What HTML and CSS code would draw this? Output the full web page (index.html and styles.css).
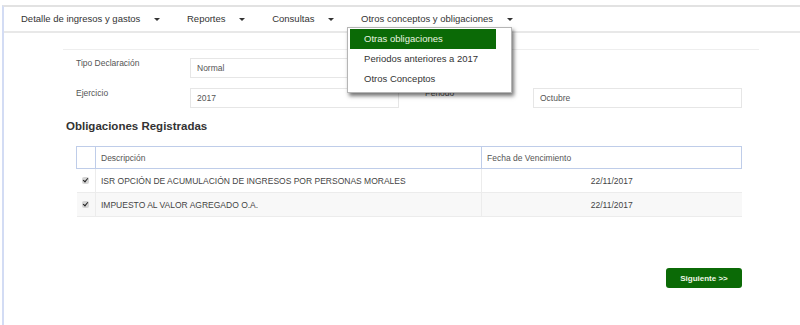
FILE: index.html
```html
<!DOCTYPE html>
<html>
<head>
  <title>Obligaciones Registradas</title>
  <link rel="stylesheet" href="styles.css">
</head>
<body>
  <div class="page">
    <ul class="navbar">
      <li>Detalle de ingresos y gastos <span class="caret"></span></li>
      <li>Reportes <span class="caret"></span></li>
      <li>Consultas <span class="caret"></span></li>
      <li class="open">Otros conceptos y obligaciones <span class="caret"></span>
        <ul class="dropdown">
          <li class="active">Otras obligaciones</li>
          <li>Periodos anteriores a 2017</li>
          <li>Otros Conceptos</li>
        </ul>
      </li>
    </ul>

    <div class="content">
      <div class="rule"></div>

      <form class="form-grid">
        <label>Tipo Declaración</label>
        <div class="field">Normal</div>
        <span></span>
        <span></span>

        <label>Ejercicio</label>
        <div class="field">2017</div>
        <label class="label-right">Periodo</label>
        <div class="field">Octubre</div>
      </form>

      <h2 class="section-title">Obligaciones Registradas</h2>

      <table class="obligations">
        <tr>
          <th class="check-col"></th>
          <th>Descripción</th>
          <th class="date-col">Fecha de Vencimiento</th>
        </tr>
        <tr>
          <td class="check-col"><span class="check"></span></td>
          <td>ISR OPCIÓN DE ACUMULACIÓN DE INGRESOS POR PERSONAS MORALES</td>
          <td class="date">22/11/2017</td>
        </tr>
        <tr class="alt">
          <td class="check-col"><span class="check"></span></td>
          <td>IMPUESTO AL VALOR AGREGADO O.A.</td>
          <td class="date">22/11/2017</td>
        </tr>
      </table>

      <div class="actions">
        <button type="button" class="btn-next">Siguiente &gt;&gt;</button>
      </div>
    </div>
  </div>
</body>
</html>
```

FILE: styles.css
```css
body {
  margin: 0;
  font-family: "Liberation Sans", Arial, sans-serif;
  color: #333333;
  background: #ffffff;
}

.page {
  margin: 5px 0 0 2px;
  border-top: 2px solid #e2e2e2;
  border-left: 2px solid #d3dcf4;
  min-height: 318px;
}

/* top menu */
.navbar {
  list-style: none;
  margin: 0;
  padding: 0 0 0 17px;
  height: 24px;
  border-bottom: 2px solid #e8e8e8;
  display: flex;
  align-items: center;
  gap: 27px;
  font-size: 9.5px;
}

.navbar > li {
  position: relative;
  height: 24px;
  line-height: 24px;
  white-space: nowrap;
}

.caret {
  display: inline-block;
  margin-left: 11px;
  vertical-align: middle;
  border-top: 3px solid #333333;
  border-left: 3px solid transparent;
  border-right: 3px solid transparent;
}

.dropdown {
  list-style: none;
  position: absolute;
  top: 20px;
  left: -14px;
  width: 146px;
  margin: 0;
  padding: 1px 15px 3px 2px;
  background: #ffffff;
  border: 1px solid #b5b5b5;
  box-shadow: 2px 3px 4px rgba(0, 0, 0, 0.55);
  z-index: 10;
}

.dropdown li {
  height: 20px;
  line-height: 20px;
  padding-left: 14px;
  color: #333333;
}

.dropdown li.active {
  background: #0b6a06;
  color: #eaf5e0;
}

/* page body */
.rule {
  margin: 16px 41px 0 59px;
  border-top: 1px solid #eeeeee;
}

.form-grid {
  display: grid;
  grid-template-columns: 114px 209px 134px 209px;
  row-gap: 10px;
  margin: 8px 0 0 72px;
  font-size: 8.5px;
}

.form-grid label {
  color: #555555;
  line-height: 10px;
}

.form-grid .label-right {
  padding-left: 26px;
}

.field {
  height: 18px;
  line-height: 18px;
  padding-left: 6px;
  border: 1px solid #e6e6e6;
  color: #555555;
}

.section-title {
  margin: 11px 0 0 62px;
  font-size: 11.5px;
  line-height: 14px;
  font-weight: bold;
  color: #333333;
}

.obligations {
  margin: 13px 0 0 72px;
  width: 666px;
  border-collapse: collapse;
  font-size: 8.5px;
  color: #444444;
}

.obligations th {
  height: 21px;
  padding: 0 5px;
  text-align: left;
  font-weight: normal;
  color: #555555;
  border: 1px solid #bfcde9;
}

.obligations td {
  height: 23px;
  padding: 0 5px;
  border-top: 1px solid #ececec;
  border-bottom: 1px solid #ececec;
}

.obligations td + td {
  border-left: 1px solid #ececec;
}

.obligations .check-col {
  width: 8px;
}

.obligations .date-col {
  width: 249px;
}

.obligations td.date {
  text-align: center;
}

.obligations tr.alt td {
  background: #f8f8f8;
}

.check {
  display: block;
  width: 7px;
  height: 7px;
  border-radius: 2px;
  background: #d5d5d5;
  position: relative;
}

.check::after {
  content: "";
  position: absolute;
  left: 2px;
  top: 0px;
  width: 2px;
  height: 4px;
  border-right: 1.5px solid #222222;
  border-bottom: 1.5px solid #222222;
  transform: rotate(40deg);
}

.actions {
  display: flex;
  justify-content: flex-end;
  width: 738px;
  margin-top: 51px;
}

.btn-next {
  width: 76px;
  height: 20px;
  border: none;
  border-radius: 3px;
  background: #0b6a06;
  color: #eef7e6;
  font-family: "Liberation Sans", Arial, sans-serif;
  font-size: 8px;
  font-weight: bold;
  cursor: pointer;
}
```
